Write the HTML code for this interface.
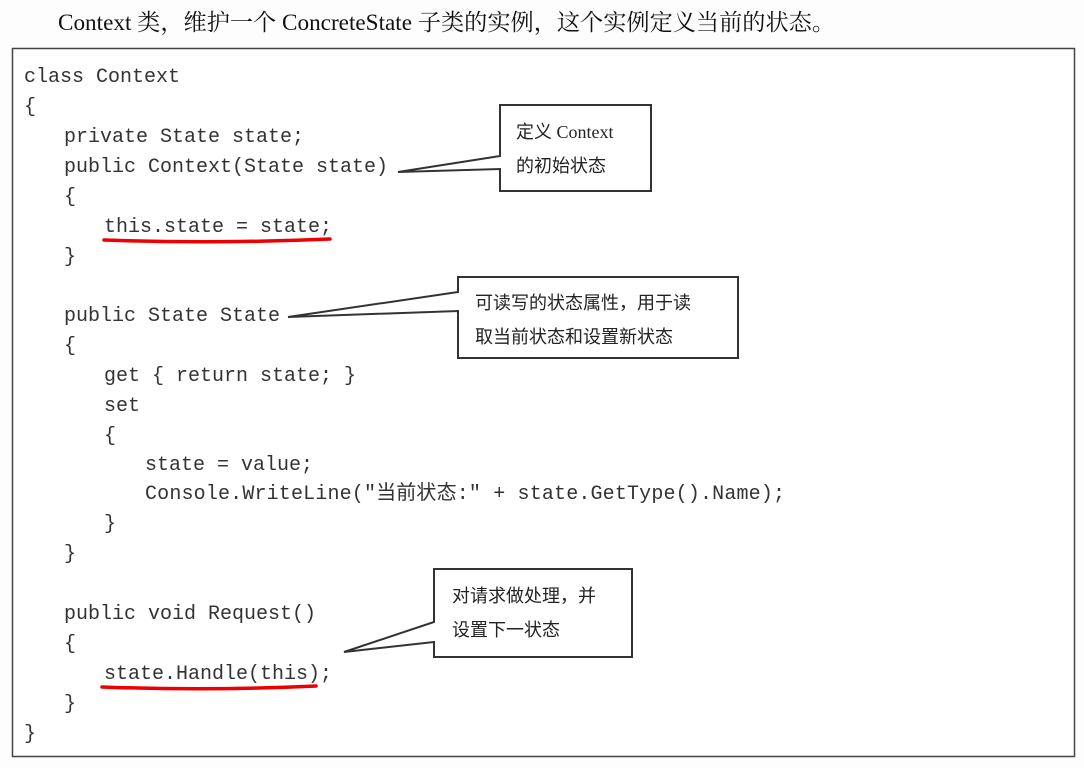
<!DOCTYPE html>
<html><head><meta charset="utf-8"><style>
html,body{margin:0;padding:0;background:#fff;}
svg{display:block}
.c{font-family:"Liberation Mono","Noto Sans CJK SC",monospace;font-size:20px;fill:#333;}
.t{font-family:"Liberation Serif","Noto Sans CJK SC",sans-serif;font-size:18px;fill:#222;}
.h{font-family:"Liberation Serif","Noto Serif CJK SC",serif;font-size:23px;fill:#111;}
</style></head><body>
<svg width="1084" height="768" viewBox="0 0 1084 768" xmlns="http://www.w3.org/2000/svg">
<rect width="1084" height="768" fill="#fdfdfd"/>
<text class="h" x="58" y="30" textLength="777" lengthAdjust="spacingAndGlyphs">Context 类，维护一个 ConcreteState 子类的实例，这个实例定义当前的状态。</text>
<rect x="12.5" y="48.5" width="1062" height="708" fill="#fff" stroke="#444" stroke-width="1.5"/>
<g class="c">
<text x="24" y="82">class Context</text>
<text x="24" y="112">{</text>
<text x="64" y="142">private State state;</text>
<text x="64" y="172">public Context(State state)</text>
<text x="64" y="202">{</text>
<text x="104" y="232">this.state = state;</text>
<text x="64" y="262">}</text>
<text x="64" y="321">public State State</text>
<text x="64" y="351">{</text>
<text x="104" y="381">get {  return state; }</text>
<text x="104" y="411">set</text>
<text x="104" y="441">{</text>
<text x="145" y="470">state = value;</text>
<text x="145" y="499" textLength="640" lengthAdjust="spacing">Console.WriteLine("当前状态:" + state.GetType().Name);</text>
<text x="104" y="529">}</text>
<text x="64" y="559">}</text>
<text x="64" y="619">public void Request()</text>
<text x="64" y="649">{</text>
<text x="104" y="679">state.Handle(this);</text>
<text x="64" y="709">}</text>
<text x="24" y="739">}</text>
</g>
<path d="M104 240 Q215 244 330 239" stroke="#e00" stroke-width="3.5" fill="none" stroke-linecap="round"/>
<path d="M102 687 Q210 691 316 686" stroke="#e00" stroke-width="3.5" fill="none" stroke-linecap="round"/>
<g fill="#fff" stroke="#333" stroke-width="2">
<path d="M500 105 H651 V191 H500 V169 L398 172 L500 156 Z"/>
<path d="M458 277 H738 V358 H458 V311 L288 317 L458 292 Z"/>
<path d="M434 569 H632 V657 H434 V642 L344 652 L434 622 Z"/>
</g>
<g class="t">
<text x="516" y="138">定义 Context</text>
<text x="516" y="172">的初始状态</text>
<text x="475" y="309">可读写的状态属性，用于读</text>
<text x="475" y="343">取当前状态和设置新状态</text>
<text x="452" y="602">对请求做处理，并</text>
<text x="452" y="636">设置下一状态</text>
</g>
</svg>
</body></html>
